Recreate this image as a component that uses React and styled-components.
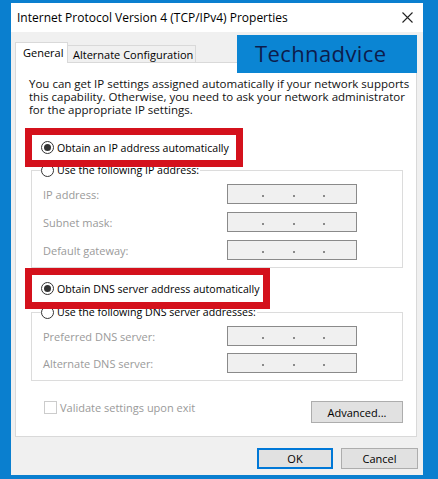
import React from 'react';
import styled, { createGlobalStyle } from 'styled-components';

const Global = createGlobalStyle`
  html, body { margin: 0; padding: 0; background: #0a7fcf; }
  body {
    width: 438px; height: 479px; overflow: hidden;
    font-family: "Open Sans", "Noto Sans", sans-serif;
    -webkit-font-smoothing: antialiased;
  }
  * { box-sizing: border-box; }
`;

const Page = styled.div`
  width: 438px;
  height: 479px;
  padding: 3px 15px 4px 11px;
  background: #0a7fcf;
`;

const Window = styled.div`
  position: relative;
  width: 412px;
  height: 472px;
  background: #f0f0f0;
  display: flex;
  flex-direction: column;
`;

const TitleBar = styled.div`
  height: 29px;
  flex: none;
  background: #fff;
  display: flex;
  align-items: center;
  justify-content: space-between;
  padding: 0 10px 0 6px;
  font-size: 12px;
  color: #000;
`;

const Body = styled.div`
  padding: 10px 6px 0 4px;
  display: flex;
  flex-direction: column;
`;

const Tabs = styled.div`
  height: 20px;
  display: flex;
  align-items: flex-end;
`;

const Tab = styled.div`
  position: relative;
  z-index: 1;
  height: ${p => (p.$active ? '21px' : '17px')};
  margin-bottom: ${p => (p.$active ? '-1px' : '0')};
  width: ${p => p.$w}px;
  padding-left: ${p => (p.$active ? '7px' : '5px')};
  padding-bottom: ${p => (p.$active ? '1px' : '0')};
  display: flex;
  align-items: center;
  background: ${p => (p.$active ? '#fff' : '#f0f0f0')};
  border: 1px solid #d9d9d9;
  border-bottom: 0;
  border-left: ${p => (p.$active ? '1px solid #d9d9d9' : '0')};
  font-size: 11px;
  color: #000;
  white-space: nowrap;
`;

const Panel = styled.div`
  background: #fff;
  border: 1px solid #d9d9d9;
  padding: 14px 13px 13px 13px;
  display: flex;
  flex-direction: column;
`;

const Description = styled.div`
  display: flex;
  flex-direction: column;
  font-size: 11.5px;
  color: #111;
  white-space: nowrap;
`;

const DescLine = styled.span`
  display: block;
  height: 13px;
  line-height: 13px;
`;

const Highlight = styled.div`
  position: relative;
  z-index: 1;
  width: ${p => p.$w}px;
  height: ${p => p.$h}px;
  margin: ${p => p.$mt}px 0 0 -4px;
  border: 7px solid #d4111c;
  background: #fff;
  display: flex;
  align-items: center;
  padding-left: 9px;
  padding-top: ${p => p.$pt || 0}px;
`;

const RadioRow = styled.label`
  display: flex;
  align-items: center;
  gap: 3px;
  font-size: 10.6px;
  line-height: 14px;
  color: #000;
  white-space: nowrap;
`;

const RadioCircle = styled.span`
  width: 13px;
  height: 13px;
  flex: none;
  border-radius: 50%;
  border: 1px solid #333;
  background: #fff;
  display: flex;
  align-items: center;
  justify-content: center;
  &::after {
    content: '';
    width: 7px;
    height: 7px;
    border-radius: 50%;
    background: ${p => (p.$checked ? '#333' : 'transparent')};
  }
`;

const Group = styled.fieldset`
  margin: ${p => p.$mt}px 0 0 2px;
  padding: 7px 0 7px 11px;
  border: 1px solid #dcdcdc;
  min-width: 0;
`;

const Legend = styled.legend`
  margin-left: -2px;
  padding: 0 1px 0 0;
  background: #fff;
`;

const Fields = styled.div`
  display: grid;
  grid-template-columns: 184px 130px;
  row-gap: ${p => p.$gap}px;
  align-items: center;
`;

const FieldLabel = styled.span`
  font-size: 11px;
  color: #9a9a9a;
  white-space: nowrap;
`;

const IpBox = styled.div`
  height: 20px;
  background: #f0f0f0;
  border: 1px solid #8a8a8a;
  display: flex;
  align-items: center;
  padding-left: 34px;
  gap: 28.5px;
`;

const IpDot = styled.span`
  width: 2px;
  height: 2px;
  margin-top: 4px;
  background: #8a8a8a;
`;

const BottomRow = styled.div`
  margin-top: 20px;
  display: flex;
  justify-content: space-between;
  align-items: flex-start;
  padding-left: 15px;
`;

const CheckRow = styled.label`
  display: flex;
  align-items: center;
  gap: 3px;
  height: 13px;
  font-size: 11px;
  color: #9a9a9a;
  white-space: nowrap;
`;

const CheckBox = styled.span`
  width: 13px;
  height: 13px;
  border: 1px solid #cccccc;
  background: #fff;
`;

const Button = styled.button`
  width: ${p => p.$w}px;
  height: ${p => p.$h}px;
  font-family: inherit;
  font-size: 11px;
  color: #000;
  background: #e1e1e1;
  border: ${p => (p.$primary ? '2px solid #0078d7' : '1px solid #adadad')};
  padding: 0;
  margin: 0;
`;

const Footer = styled.div`
  margin: 11px -1px 0 0;
  display: flex;
  justify-content: flex-end;
  gap: 8px;
`;

const Banner = styled.div`
  position: absolute;
  left: 226px;
  top: 32px;
  width: 180px;
  height: 38px;
  background: #0b85d3;
  color: #0d1c4c;
  font-size: 22px;
  letter-spacing: 0.4px;
  line-height: 36px;
  padding-left: 18px;
  font-family: "Open Sans", "Noto Sans", sans-serif;
`;

const CloseIcon = () => (
  <svg width="11" height="11" viewBox="0 0 11 11">
    <path d="M0.5 0.5 L10.5 10.5 M10.5 0.5 L0.5 10.5" stroke="#222" strokeWidth="1.1" fill="none" />
  </svg>
);

const IpField = () => (
  <IpBox>
    <IpDot />
    <IpDot />
    <IpDot />
  </IpBox>
);

export default function App() {
  return (
    <>
      <Global />
      <Page>
        <Window>
          <TitleBar>
            <span>Internet Protocol Version 4 (TCP/IPv4) Properties</span>
            <CloseIcon />
          </TitleBar>
          <Body>
            <Tabs>
              <Tab $active $w={53}>General</Tab>
              <Tab $w={128}>Alternate Configuration</Tab>
            </Tabs>
            <Panel>
              <Description>
                <DescLine>You can get IP settings assigned automatically if your network supports</DescLine>
                <DescLine>this capability. Otherwise, you need to ask your network administrator</DescLine>
                <DescLine>for the appropriate IP settings.</DescLine>
              </Description>

              <Highlight $w={218} $h={39} $mt={12}>
                <RadioRow>
                  <RadioCircle $checked />
                  Obtain an IP address automatically
                </RadioRow>
              </Highlight>

              <Group $mt={-4}>
                <Legend>
                  <RadioRow>
                    <RadioCircle />
                    Use the following IP address:
                  </RadioRow>
                </Legend>
                <Fields $gap={8}>
                  <FieldLabel>IP address:</FieldLabel>
                  <IpField />
                  <FieldLabel>Subnet mask:</FieldLabel>
                  <IpField />
                  <FieldLabel>Default gateway:</FieldLabel>
                  <IpField />
                </Fields>
              </Group>

              <Highlight $w={245} $h={41} $mt={0}>
                <RadioRow>
                  <RadioCircle $checked />
                  Obtain DNS server address automatically
                </RadioRow>
              </Highlight>

              <Group $mt={-4}>
                <Legend>
                  <RadioRow>
                    <RadioCircle />
                    Use the following DNS server addresses:
                  </RadioRow>
                </Legend>
                <Fields $gap={7}>
                  <FieldLabel>Preferred DNS server:</FieldLabel>
                  <IpField />
                  <FieldLabel>Alternate DNS server:</FieldLabel>
                  <IpField />
                </Fields>
              </Group>

              <BottomRow>
                <CheckRow>
                  <CheckBox />
                  Validate settings upon exit
                </CheckRow>
                <Button $w={92} $h={22}>Advanced...</Button>
              </BottomRow>
            </Panel>
            <Footer>
              <Button $primary $w={76} $h={21}>OK</Button>
              <Button $w={77} $h={21}>Cancel</Button>
            </Footer>
          </Body>
          <Banner>Technadvice</Banner>
        </Window>
      </Page>
    </>
  );
}
